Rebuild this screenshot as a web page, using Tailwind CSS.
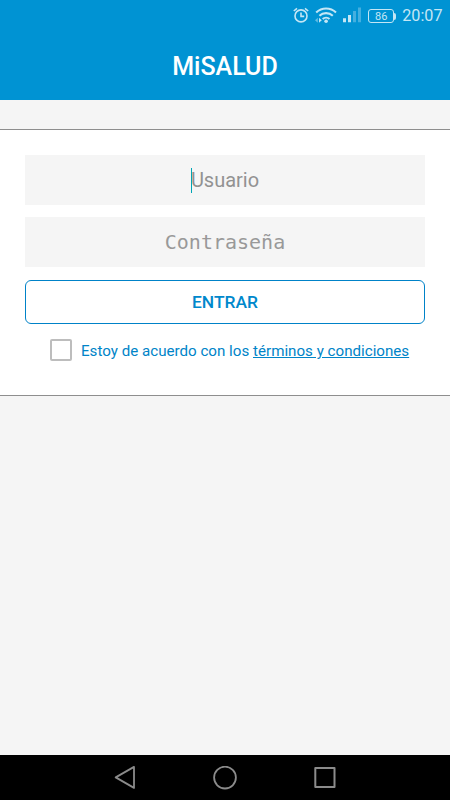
<!DOCTYPE html>
<html lang="es">
<head>
    <meta charset="UTF-8">
    <meta name="viewport" content="width=device-width, initial-scale=1.0">
    <title>MiSALUD</title>
    <script src="https://cdn.jsdelivr.net/npm/@tailwindcss/browser@4"></script>
</head>
<body class="h-[800px] w-[450px] flex flex-col overflow-hidden bg-[#f5f5f5] font-[Roboto,sans-serif]">
    <!-- Cabecera -->
    <header class="h-[100px] shrink-0 bg-[#0093d3] text-white">
        <div class="h-8 flex items-center justify-end pr-[7.5px] text-[#c4e6f5]">
            <svg class="w-4 h-[18px] mr-[6px]" viewBox="0 0 16 18" fill="none" stroke="currentColor" stroke-width="1.6">
                <circle cx="8" cy="8.9" r="6"/>
                <path d="M.8 4 4 1.3M15.2 4 12 1.3M8 5.4v4h3.2"/>
            </svg>
            <svg class="w-[22px] h-[18px] mr-[6px]" viewBox="0 0 22 18" fill="none" stroke="currentColor" stroke-width="2.1">
                <path d="M1.2 5.4a14.4 14.4 0 0 1 19.8 0M4.4 8.8a9.8 9.8 0 0 1 13.4 0M7.7 12.1a5 5 0 0 1 6.8 0"/>
                <circle cx="11.1" cy="14.3" r="1.8" fill="currentColor" stroke="none"/>
                <path d="M2.8 10.8v5L0 13.3z" fill="currentColor" fill-opacity=".5" stroke="none"/>
                <path d="M4 10.8v5l2.8-2.5z" fill="currentColor" stroke="none"/>
            </svg>
            <svg class="w-[18px] h-[18px] mr-[7px]" viewBox="0 0 18 18" fill="currentColor">
                <path d="M0 11.3h3v4H0zM5 8h3v7.3H5z"/>
                <path d="M10 4h3v11.3h-3zM15 .5h3v14.8h-3z" fill-opacity=".35"/>
            </svg>
            <div class="flex items-center mr-[6px]">
                <span class="w-[26px] h-[14px] flex items-center justify-center border border-current rounded-[3px] text-[11px] leading-none">86</span>
                <span class="w-[2px] h-[7px] bg-current rounded-r-sm"></span>
            </div>
            <span class="text-[16.2px] leading-none">20:07</span>
        </div>
        <h1 class="h-[68px] pt-[2px] flex items-center justify-center text-[25px] font-medium">MiSALUD</h1>
    </header>

    <!-- Formulario de acceso -->
    <main class="grow pt-[29px]">
        <form class="h-[267px] px-[25px] pt-[25px] bg-white border-y border-[#8e8e8e]">
            <div class="h-[50px] mb-[12px] flex items-center justify-center bg-[#f5f5f5] text-xl text-[#929292]">
                <span class="w-px h-[25px] bg-[#00a5b5]"></span>
                <span class="-ml-px">Usuario</span>
            </div>
            <div class="h-[50px] mb-[13px] pb-px flex items-center justify-center bg-[#f5f5f5] text-xl text-[#999] font-['DejaVu_Sans_Mono',monospace]">
                <span>Contraseña</span>
            </div>
            <button type="button" class="w-full h-11 pt-[2px] block border border-[#0082c8] rounded-md text-[17.4px] leading-none font-medium text-[#0088cc]">ENTRAR</button>
            <label class="h-[22px] mt-[15px] ml-[25px] flex items-center text-[15.15px] text-[#0084c8] whitespace-nowrap">
                <span class="w-[22px] h-[22px] mr-[9px] shrink-0 border-2 border-[#bdbdbd] rounded-[2px]"></span>
                <span class="pt-[3px]">Estoy de acuerdo con los <a class="underline" href="#">términos y condiciones</a></span>
            </label>
        </form>
    </main>

    <!-- Barra de navegación -->
    <nav class="h-[45px] shrink-0 flex items-center justify-center gap-[76px] bg-black text-[#8b8b8b]">
        <svg class="w-6 h-6" viewBox="0 0 24 24" fill="none" stroke="currentColor" stroke-width="1.8" stroke-linejoin="round">
            <path d="M21 .9v21L2.7 11.4z"/>
        </svg>
        <svg class="w-6 h-6" viewBox="0 0 24 24" fill="none" stroke="currentColor" stroke-width="1.8">
            <circle cx="12" cy="11.6" r="10.9"/>
        </svg>
        <svg class="w-6 h-6" viewBox="0 0 24 24" fill="none" stroke="currentColor" stroke-width="2" stroke-linejoin="round">
            <path d="M2.3 2h19.2v19H2.3z"/>
        </svg>
    </nav>
</body>
</html>
